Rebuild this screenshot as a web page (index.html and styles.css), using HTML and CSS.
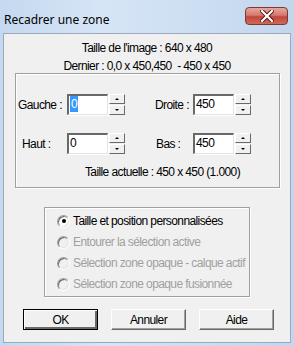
FILE: index.html
```html
<!DOCTYPE html>
<html lang="fr">
<head>
  <meta charset="UTF-8">
  <meta name="viewport" content="width=device-width, initial-scale=1.0">
  <title>Recadrer une zone</title>
  <link rel="stylesheet" href="styles.css">
</head>
<body>

<div class="window">
  <!-- barre de titre -->
  <div class="titlebar">
    <span class="title">Recadrer une zone</span>
    <span class="close">
      <svg width="14" height="12" viewBox="0 0 14 12">
        <path d="M2 1 L12 11 M12 1 L2 11" stroke="#4a1410" stroke-width="4" stroke-linecap="square" fill="none"/>
        <path d="M2 1 L12 11 M12 1 L2 11" stroke="#fff" stroke-width="2.2" stroke-linecap="square" fill="none"/>
      </svg>
    </span>
  </div>

  <div class="client">
    <p class="info">Taille de l'image : 640 x 480</p>
    <p class="info info-last">Dernier : 0,0 x 450,450&nbsp; - 450 x 450</p>

    <!-- zone de recadrage -->
    <div class="group size-group">
      <div class="fields">
        <label class="lbl">Gauche :</label>
        <div class="spin">
          <div class="edit"><span class="sel">0</span></div>
          <div class="arrows"><span class="up"></span><span class="down"></span></div>
        </div>
        <label class="lbl lbl-right">Droite :</label>
        <div class="spin">
          <div class="edit">450</div>
          <div class="arrows"><span class="up"></span><span class="down"></span></div>
        </div>

        <label class="lbl lbl-haut">Haut :</label>
        <div class="spin">
          <div class="edit">0</div>
          <div class="arrows"><span class="up"></span><span class="down"></span></div>
        </div>
        <label class="lbl lbl-bas">Bas :</label>
        <div class="spin">
          <div class="edit">450</div>
          <div class="arrows"><span class="up"></span><span class="down"></span></div>
        </div>
      </div>
      <p class="actual">Taille actuelle : 450 x 450 (1.000)</p>
    </div>

    <!-- mode -->
    <div class="group mode-group">
      <div class="radio"><span class="dot checked"></span>Taille et position personnalisées</div>
      <div class="radio disabled"><span class="dot"></span>Entourer la sélection active</div>
      <div class="radio disabled"><span class="dot"></span>Sélection zone opaque - calque actif</div>
      <div class="radio disabled"><span class="dot"></span>Sélection zone opaque fusionnée</div>
    </div>

    <div class="buttons">
      <button class="btn default">OK</button>
      <button class="btn">Annuler</button>
      <button class="btn">Aide</button>
    </div>
  </div>
</div>

</body>
</html>
```

FILE: styles.css
```css
body {
  margin: 0;
  padding: 0;
  background-color: #fff;
}
.window {
  width: 294px;
  height: 346px;
  box-sizing: border-box;
  background: linear-gradient(90deg, #c4d8ef 0%, #d6e5f6 35%, #cfe0f3 60%, #c2d6ee 100%);
  display: flex;
  flex-direction: column;
}
.titlebar {
  height: 33px;
  display: flex;
  align-items: flex-start;
}
.title {
  font-family: "Noto Sans", "Open Sans", sans-serif;
  font-size: 12px;
  color: #000;
  margin: 11px 0 0 4px;
}
.close {
  margin: 7px 6px 0 auto;
  width: 43px;
  height: 18px;
  box-sizing: border-box;
  border: 1px solid #7a3a33;
  border-radius: 4px;
  background: linear-gradient(#e8a69e 0%, #d57a70 45%, #c2463b 55%, #cf6a58 100%);
  display: flex;
  align-items: center;
  justify-content: center;
}
.client {
  margin: 0 3px 3px 3px;
  flex: 1;
  border: 1px solid #9aa9bb;
  background-color: #f0f0f0;
  font-family: "Liberation Sans", Arial, sans-serif;
  font-size: 12px;
  letter-spacing: -0.6px;
  white-space: nowrap;
  color: #000;
}
.info {
  margin: 7px 0 0;
  line-height: 14px;
  text-align: center;
}
.info-last {
  margin-top: 4px;
}
.group {
  box-sizing: border-box;
  border: 1px solid #a0a0a0;
  box-shadow: 1px 1px 0 #fff, inset 1px 1px 0 #fff;
}
.size-group {
  margin-left: 11px;
  width: 265px;
  height: 115px;
  padding-top: 20px;
}
.fields {
  display: grid;
  grid-template-columns: 51px 58px 68px 58px;
  grid-auto-rows: 21px;
  row-gap: 18px;
  align-items: center;
}
.lbl {
  padding-left: 2px;
}
.lbl-right {
  padding-left: 30px;
}
.lbl-haut {
  padding-left: 6px;
}
.lbl-bas {
  padding-left: 31px;
}
.spin {
  display: flex;
  height: 21px;
}
.edit {
  width: 41px;
  height: 21px;
  box-sizing: border-box;
  background-color: #fff;
  border-top: 2px solid #696969;
  border-left: 2px solid #696969;
  border-right: 1px solid #e3e3e3;
  border-bottom: 1px solid #e3e3e3;
  box-shadow: 1px 1px 0 #fff;
  padding: 1px 0 0 1px;
  line-height: 15px;
}
.sel {
  background-color: #3399ff;
  color: #fff;
  padding: 1px 1px;
}
.arrows {
  margin-left: 1px;
  width: 16px;
  display: flex;
  flex-direction: column;
}
.arrows span {
  height: 10px;
  box-sizing: border-box;
  background-color: #f0f0f0;
  border-top: 1px solid #fff;
  border-left: 1px solid #fff;
  border-right: 1px solid #696969;
  border-bottom: 1px solid #696969;
  display: flex;
  align-items: center;
  justify-content: center;
}
.arrows span + span {
  margin-top: 1px;
}
.arrows .up::after {
  content: "";
  border-left: 2px solid transparent;
  border-right: 2px solid transparent;
  border-bottom: 2px solid #000;
}
.arrows .down::after {
  content: "";
  border-left: 2px solid transparent;
  border-right: 2px solid transparent;
  border-top: 2px solid #000;
}
.actual {
  margin: 11px 0 0;
  line-height: 14px;
  text-align: center;
  padding-left: 30px;
}
.mode-group {
  margin: 19px 0 0 40px;
  width: 206px;
  height: 90px;
  padding: 6px 0 0 12px;
  display: flex;
  flex-direction: column;
  gap: 7px;
}
.radio {
  display: flex;
  align-items: center;
  line-height: 14px;
  gap: 3px;
}
.radio.disabled {
  color: #a0a0a0;
}
.dot {
  width: 13px;
  height: 13px;
  box-sizing: border-box;
  border-radius: 50%;
  border: 1px solid;
  border-color: #a0a0a0 #fff #fff #a0a0a0;
  box-shadow: inset 1px 1px 0 #696969, inset -1px -1px 0 #e3e3e3;
  background-color: #fff;
  display: flex;
  align-items: center;
  justify-content: center;
}
.disabled .dot {
  background-color: #f0f0f0;
}
.dot.checked::after {
  content: "";
  width: 4px;
  height: 4px;
  border-radius: 50%;
  background-color: #000;
}
.buttons {
  display: flex;
  gap: 13px;
  margin: 12px 0 0 19px;
}
.btn {
  width: 75px;
  height: 21px;
  box-sizing: border-box;
  font-family: inherit;
  font-size: 12px;
  letter-spacing: inherit;
  color: #000;
  background-color: #f0f0f0;
  border-top: 1px solid #fff;
  border-left: 1px solid #fff;
  border-right: 1px solid #696969;
  border-bottom: 1px solid #696969;
  box-shadow: inset -1px -1px 0 #a0a0a0;
  padding: 0;
}
.btn.default {
  border: 1px solid #000;
  box-shadow: inset 1px 1px 0 #fff, inset -2px -2px 0 #696969;
}
```
